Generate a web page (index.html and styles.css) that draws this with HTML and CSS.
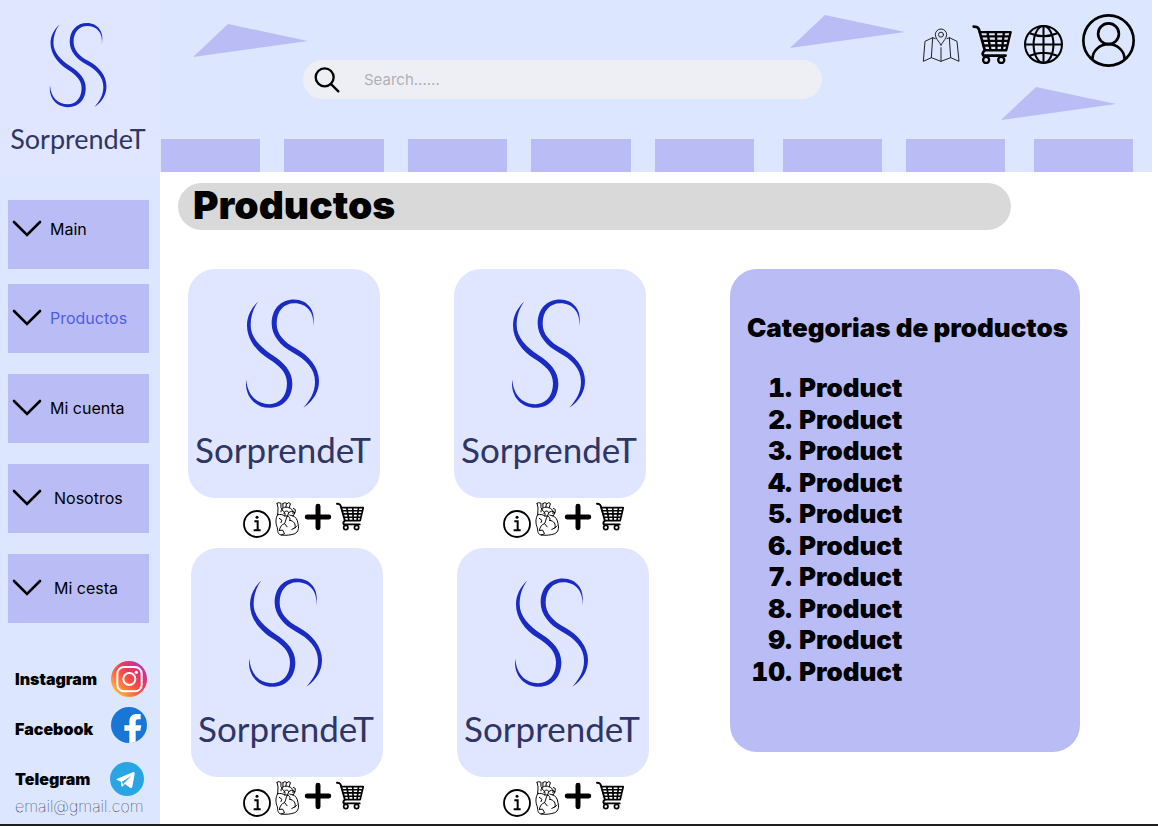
FILE: index.html
```html
<!DOCTYPE html>
<html lang="es">
<head>
<meta charset="utf-8">
<meta name="viewport" content="width=device-width, initial-scale=1">
<title>Productos</title>
<link rel="stylesheet" href="styles.css">
</head>
<body>
<svg class="sprite" aria-hidden="true">
  <symbol id="swirl" viewBox="15 17 228 332">
    <path d="M55 27C35 45 21 70 21 98C21 140 48 175 85 199C118 220 141 240 141 273C141 312 117 335 88 335C50 335 22 308 19 262C12 308 44 346 88 346C132 346 157 314 157 273C157 236 132 210 98 188C62 164 32 135 32 98C32 70 40 47 55 27Z"/>
    <path d="M219 102C230 55 203 21 162 21C122 21 95 50 95 93C95 130 122 160 158 180C196 200 225 228 225 268C225 300 210 324 190 346C222 324 237 297 237 265C237 225 208 190 168 168C132 149 110 125 110 93C110 55 132 32 163 32C200 32 225 60 219 102Z"/>
  </symbol>
  <symbol id="chevron" viewBox="0 0 30 17">
    <path d="M2 2L15 15L28 2" fill="none" stroke="#000" stroke-width="2.6" stroke-linecap="round"/>
  </symbol>
  <symbol id="cart" viewBox="0 0 117 116">
    <g fill="none" stroke="#000" stroke-linecap="round" stroke-linejoin="round">
      <path stroke-width="8" d="M4 5L13 6Q18 8 20 14L37 75Q27 84 33 91H99"/>
      <path stroke-width="7" d="M22 21H114L101 75H37M26 34H111M29 47H107M33 61H104M45 21L54 75M70 21L72 75M94 21L88 75"/>
      <circle cx="41" cy="104" r="9" stroke-width="7"/>
      <circle cx="86" cy="104" r="9" stroke-width="7"/>
    </g>
  </symbol>
  <symbol id="info" viewBox="0 0 84 84">
    <circle cx="42" cy="42" r="39" fill="none" stroke="#000" stroke-width="5.5"/>
    <circle cx="42" cy="22" r="4.5"/>
    <path d="M34 34H44V61M32 61H53" fill="none" stroke="#000" stroke-width="6"/>
  </symbol>
  <symbol id="heart" viewBox="0 0 74 104">
    <g fill="none" stroke="#000" stroke-width="3" stroke-linecap="round" stroke-linejoin="round">
      <path d="M5 4L10 2L17 4V17L21 23M5 4L8 18L7 39M23 5L29 2L34 4L32 16M23 5V18M36 5L41 2L46 5L42 18M17 30C16 18 30 13 40 17C48 19 53 24 55 30M26 35C27 27 37 25 41 32L37 43M55 20L61 23L60 33L52 34M41 32L50 28L60 33L54 43L44 40"/>
      <path d="M7 39C0 49 0 66 6 79C7 90 7 99 18 101C33 103 48 101 59 97C70 92 73 80 69 66C68 54 61 44 53 42M7 39C14 37 22 38 29 43C31 36 28 28 20 24M29 43C40 41 47 47 44 56M44 56C57 58 63 67 60 79M37 43C31 51 32 60 28 66C19 69 14 76 12 87M28 66L36 76M12 50L20 56L17 63M60 79L50 84M60 79L66 73M12 87L22 86L28 97L18 101"/>
    </g>
  </symbol>
  <symbol id="plus" viewBox="0 0 26 26">
    <path d="M13 3V23M3 13H23" stroke="#000" stroke-width="4.6" stroke-linecap="round"/>
  </symbol>
</svg>

<div class="page">
  <aside class="sidebar">
    <a class="brand" href="#">
      <svg class="brand-mark" aria-hidden="true"><use href="#swirl"/></svg>
      <span class="brand-name">SorprendeT</span>
    </a>
    <nav class="menu">
      <div class="menu-pair">
        <a class="menu-item menu-item-top" href="#"><svg class="chevron" aria-hidden="true"><use href="#chevron"/></svg>Main</a>
        <a class="menu-item menu-item-current" href="#"><svg class="chevron" aria-hidden="true"><use href="#chevron"/></svg>Productos</a>
      </div>
      <a class="menu-item" href="#"><svg class="chevron" aria-hidden="true"><use href="#chevron"/></svg>Mi cuenta</a>
      <a class="menu-item menu-item-wide" href="#"><svg class="chevron" aria-hidden="true"><use href="#chevron"/></svg>Nosotros</a>
      <a class="menu-item menu-item-wide" href="#"><svg class="chevron" aria-hidden="true"><use href="#chevron"/></svg>Mi cesta</a>
    </nav>
    <div class="social">
      <a class="social-link" href="#">Instagram
        <svg class="social-icon" viewBox="0 0 108 108" aria-hidden="true">
          <defs>
            <linearGradient id="ig" x1="0.1" y1="0.9" x2="0.9" y2="0.1">
              <stop offset="0" stop-color="#ffc145"/><stop offset="0.4" stop-color="#ff5b3d"/><stop offset="0.65" stop-color="#f0365c"/><stop offset="1" stop-color="#b035c0"/>
            </linearGradient>
          </defs>
          <circle cx="54" cy="54" r="54" fill="url(#ig)"/>
          <rect x="19" y="18" width="73" height="73" rx="20" fill="none" stroke="#fff" stroke-width="6"/>
          <circle cx="55" cy="54" r="18" fill="none" stroke="#fff" stroke-width="6"/>
          <circle cx="76" cy="34" r="5" fill="#fff"/>
        </svg>
      </a>
      <a class="social-link social-link-tall" href="#">Facebook
        <svg class="social-icon" viewBox="0 0 108 108" aria-hidden="true">
          <circle cx="54" cy="54" r="54" fill="#1877d6"/>
          <path d="M55 108V71H40V55H55V44C55 29 64 21 78 21H89V37H81C76 37 74 40 74 45V55H91L88 71H74V104Q65 108 55 108Z" fill="#fff"/>
        </svg>
      </a>
      <a class="social-link" href="#">Telegram
        <svg class="social-icon social-icon-small" viewBox="0 0 102 102" aria-hidden="true">
          <circle cx="51" cy="51" r="51" fill="#29a5e4"/>
          <path d="M20 51L70 30Q75 29 74 35L67 74Q65 80 60 77L45 66L37 74Q34 75 34 70L33 59L21 54Q18 52 20 51ZM36 59L40 69L43 62L64 42Z" fill="#fff" fill-rule="evenodd"/>
        </svg>
      </a>
      <a class="email" href="mailto:email@gmail.com">email@gmail.com</a>
    </div>
  </aside>

  <div class="content">
    <header class="header">
      <svg class="shard shard-left" viewBox="0 0 115 33" aria-hidden="true"><path d="M0 33L35 0L115 17Z"/></svg>
      <svg class="shard shard-top" viewBox="0 0 115 33" aria-hidden="true"><path d="M0 33L35 0L115 17Z"/></svg>
      <svg class="shard shard-low" viewBox="0 0 115 33" aria-hidden="true"><path d="M0 33L35 0L115 17Z"/></svg>
      <div class="header-top">
        <form class="search" role="search">
          <svg class="search-icon" viewBox="0 0 78 78" aria-hidden="true">
            <g fill="none" stroke="#000" stroke-width="7" stroke-linecap="round"><circle cx="32" cy="31" r="27"/><path d="M52 52L73 73"/></g>
          </svg>
          <input class="search-input" type="search" placeholder="Search......" aria-label="Search">
        </form>
        <nav class="tools">
          <a class="tool tool-map" href="#" aria-label="Mapa">
            <svg viewBox="66 78 114 106" width="38" height="36">
              <g fill="none" stroke="#222" stroke-width="3" stroke-linejoin="round" stroke-linecap="round">
                <path d="M123 131C115 118 106 110 106 100A17 17 0 0 1 140 100C140 110 131 118 123 131Z"/>
                <circle cx="123" cy="100" r="7.5"/>
                <path d="M106 112L98 109L75 120L70 180L94 169L123 180L152 169L177 180L171 120L148 109L141 112M98 109L94 169M123 139V180M148 109L152 169"/>
              </g>
            </svg>
          </a>
          <a class="tool" href="#" aria-label="Cesta"><svg width="40" height="39"><use href="#cart"/></svg></a>
          <a class="tool" href="#" aria-label="Idioma">
            <svg viewBox="0 0 114 114" width="39" height="39">
              <g fill="none" stroke="#000" stroke-width="6">
                <circle cx="57" cy="57" r="54"/><ellipse cx="57" cy="57" rx="29" ry="54"/>
                <path d="M57 3V111M3 57H111M17 24Q57 42 97 24M17 90Q57 72 97 90"/>
              </g>
            </svg>
          </a>
          <a class="tool tool-user" href="#" aria-label="Mi cuenta">
            <svg viewBox="0 0 158 158" width="53" height="53">
              <g fill="none" stroke="#000" stroke-width="8">
                <circle cx="79" cy="79" r="75"/><circle cx="79" cy="59" r="31"/>
                <path d="M31 135A48 45 0 0 1 127 135"/>
              </g>
            </svg>
          </a>
        </nav>
      </div>
      <div class="tabs">
        <div class="tab-group"><span class="tab"></span><span class="tab"></span><span class="tab"></span><span class="tab"></span><span class="tab"></span></div>
        <div class="tab-group"><span class="tab"></span><span class="tab"></span></div>
        <div class="tab-group"><span class="tab"></span></div>
      </div>
    </header>

    <main class="main">
      <h1 class="title">Productos</h1>
      <div class="columns">
        <div class="products">
          <div class="product-row">
            <article class="product">
              <a class="card" href="#"><svg class="card-mark" aria-hidden="true"><use href="#swirl"/></svg><span class="card-name">SorprendeT</span></a>
              <div class="actions">
                <button class="action action-info" type="button" aria-label="Información"><svg width="28" height="28"><use href="#info"/></svg></button>
                <button class="action" type="button" aria-label="Favorito"><svg width="25" height="34"><use href="#heart"/></svg></button>
                <button class="action" type="button" aria-label="Añadir"><svg width="28" height="30"><use href="#plus"/></svg></button>
                <button class="action" type="button" aria-label="Cesta"><svg width="28" height="29"><use href="#cart"/></svg></button>
              </div>
            </article>
            <article class="product">
              <a class="card" href="#"><svg class="card-mark" aria-hidden="true"><use href="#swirl"/></svg><span class="card-name">SorprendeT</span></a>
              <div class="actions actions-second">
                <button class="action action-info" type="button" aria-label="Información"><svg width="28" height="28"><use href="#info"/></svg></button>
                <button class="action" type="button" aria-label="Favorito"><svg width="25" height="34"><use href="#heart"/></svg></button>
                <button class="action" type="button" aria-label="Añadir"><svg width="28" height="30"><use href="#plus"/></svg></button>
                <button class="action" type="button" aria-label="Cesta"><svg width="28" height="29"><use href="#cart"/></svg></button>
              </div>
            </article>
          </div>
          <div class="product-row product-row-inset">
            <article class="product">
              <a class="card" href="#"><svg class="card-mark" aria-hidden="true"><use href="#swirl"/></svg><span class="card-name">SorprendeT</span></a>
              <div class="actions">
                <button class="action action-info" type="button" aria-label="Información"><svg width="28" height="28"><use href="#info"/></svg></button>
                <button class="action" type="button" aria-label="Favorito"><svg width="25" height="34"><use href="#heart"/></svg></button>
                <button class="action" type="button" aria-label="Añadir"><svg width="28" height="30"><use href="#plus"/></svg></button>
                <button class="action" type="button" aria-label="Cesta"><svg width="28" height="29"><use href="#cart"/></svg></button>
              </div>
            </article>
            <article class="product">
              <a class="card" href="#"><svg class="card-mark" aria-hidden="true"><use href="#swirl"/></svg><span class="card-name">SorprendeT</span></a>
              <div class="actions actions-second">
                <button class="action action-info" type="button" aria-label="Información"><svg width="28" height="28"><use href="#info"/></svg></button>
                <button class="action" type="button" aria-label="Favorito"><svg width="25" height="34"><use href="#heart"/></svg></button>
                <button class="action" type="button" aria-label="Añadir"><svg width="28" height="30"><use href="#plus"/></svg></button>
                <button class="action" type="button" aria-label="Cesta"><svg width="28" height="29"><use href="#cart"/></svg></button>
              </div>
            </article>
          </div>
        </div>
        <section class="categories">
          <h2 class="categories-title">Categorias de productos</h2>
          <ol class="categories-list">
            <li>Product</li><li>Product</li><li>Product</li><li>Product</li><li>Product</li>
            <li>Product</li><li>Product</li><li>Product</li><li>Product</li><li>Product</li>
          </ol>
        </section>
      </div>
    </main>
  </div>
</div>
</body>
</html>
```
FILE: styles.css
```css
:root {
  --sky: #dce6ff;
  --lilac: #babdf5;
  --mist: #e0e6ff;
  --ink: #2f3564;
  --swirl: #1a2bc3;
}

*, *::before, *::after { box-sizing: border-box; }

body {
  margin: 0;
  background: #fff;
  color: #000;
  font-family: Inter, "Liberation Sans", sans-serif;
  font-size: 16px;
}

a { color: inherit; text-decoration: none; }
svg { display: block; flex: none; }
.sprite { position: absolute; width: 0; height: 0; }

.page {
  display: flex;
  min-height: 100vh;
  border-bottom: 2px solid #1e1e1e;
}

/* Sidebar */
.sidebar {
  flex: none;
  width: 160px;
  background: var(--sky);
}

.brand {
  display: flex;
  flex-direction: column;
  align-items: center;
  height: 177px;
  padding: 22px 4px 0 0;
  background: var(--mist);
}
.brand-mark { width: 59px; height: 86px; fill: var(--swirl); }
.brand-name {
  margin-top: 14px;
  color: var(--ink);
  font-family: Lato, sans-serif;
  font-size: 27px;
  line-height: 34px;
}

.menu {
  display: flex;
  flex-direction: column;
  gap: 21px;
  padding: 23px 11px 0 8px;
}
.menu-pair { display: flex; flex-direction: column; gap: 15px; }
.menu-item {
  display: flex;
  align-items: center;
  gap: 8px;
  height: 69px;
  padding: 0 0 2px 4px;
  background: var(--lilac);
}
.menu-item-top { padding-bottom: 12px; }
.menu-item-wide { gap: 12px; }
.menu-item-current { color: #4f5ce6; }
.chevron { width: 30px; height: 17px; }

.social {
  display: flex;
  flex-direction: column;
  gap: 10px;
  padding: 38px 13px 9px 15px;
}
.social-link {
  display: flex;
  align-items: center;
  justify-content: space-between;
  height: 36px;
  font-weight: 900;
}
.social-link-tall { height: 44px; }
.social-link-tall .social-icon { align-self: flex-start; }
.social-icon { width: 36px; height: 36px; }
.social-icon-small { width: 34px; height: 34px; margin-right: 3px; }
.email {
  margin-top: -10px;
  font-weight: 100;
  line-height: 18px;
}

/* Header */
.content { flex: 1; min-width: 0; }
.header {
  position: relative;
  display: flex;
  flex-direction: column;
  justify-content: space-between;
  height: 172px;
  margin-right: 6px;
  background: var(--sky);
}
.shard { position: absolute; width: 115px; height: 33px; fill: var(--lilac); }
.shard-left { left: 33px; top: 24px; }
.shard-top { right: 247px; top: 15px; }
.shard-low { right: 36px; top: 87px; }

.header-top {
  display: flex;
  align-items: flex-start;
  justify-content: space-between;
  gap: 24px;
  padding: 14px 17px 0 143px;
}
.search {
  display: flex;
  align-items: center;
  flex: 0 1 519px;
  gap: 24px;
  height: 39px;
  margin-top: 46px;
  padding: 0 20px 0 11px;
  border-radius: 20px;
  background: #eeeff5;
}
.search-icon { width: 26px; height: 26px; }
.search-input {
  flex: 1;
  min-width: 0;
  padding: 0;
  border: 0;
  background: none;
  font: 400 15px Inter, sans-serif;
  outline: none;
}
.search-input::placeholder { color: #b0b0b4; opacity: 1; }

.tools { display: flex; align-items: center; gap: 12px; }
.tool-user { margin-left: 7px; margin-bottom: 8px; }

.tabs {
  display: grid;
  grid-template-columns: 593fr 222fr 99fr;
  gap: 29px;
  padding: 0 19px 0 1px;
}
.tab-group { display: flex; gap: 24px; }
.tab { flex: 1; height: 33px; background: var(--lilac); }

/* Main */
.main { padding: 11px 78px 7px 28px; }
.title {
  margin: 0 69px 0 -10px;
  padding: 0 15px 4px;
  border-radius: 24px;
  background: #d9d9d9;
  font-size: 39px;
  font-weight: 900;
  line-height: 43px;
}
.columns {
  display: flex;
  align-items: flex-start;
  justify-content: space-between;
  margin-top: 39px;
}
.products { display: flex; flex-direction: column; gap: 10px; }
.product-row { display: flex; gap: 70px; }
.product { width: 196px; }
.card {
  display: flex;
  flex-direction: column;
  align-items: center;
  width: 192px;
  height: 229px;
  padding: 29px 2px 0 0;
  border-radius: 27px;
  background: var(--mist);
}
.product-row-inset .card { margin-left: 3px; }
.card-mark { width: 76px; height: 111px; fill: var(--swirl); }
.card-name {
  margin-top: 19px;
  color: var(--ink);
  font-family: Lato, sans-serif;
  font-size: 35px;
  line-height: 42px;
}
.actions {
  display: flex;
  gap: 4px;
  padding: 4px 0 0 55px;
}
.actions-second { padding-left: 49px; }
.action {
  display: flex;
  align-items: flex-start;
  height: 36px;
  padding: 0;
  border: 0;
  background: none;
}
.action-info { align-items: flex-end; }

.categories {
  flex: 0 1 348px;
  padding: 43px 12px 65px 17px;
  border-radius: 27px;
  background: var(--lilac);
  font-size: 26px;
  font-weight: 900;
}
.categories-title {
  margin: 0 0 28px;
  font-size: 26px;
  font-weight: 900;
  line-height: 32px;
  white-space: nowrap;
}
.categories-list {
  display: grid;
  grid-template-rows: repeat(10, 1fr);
  height: 315px;
  margin: 0;
  padding-left: 52px;
  line-height: 31px;
}
```
